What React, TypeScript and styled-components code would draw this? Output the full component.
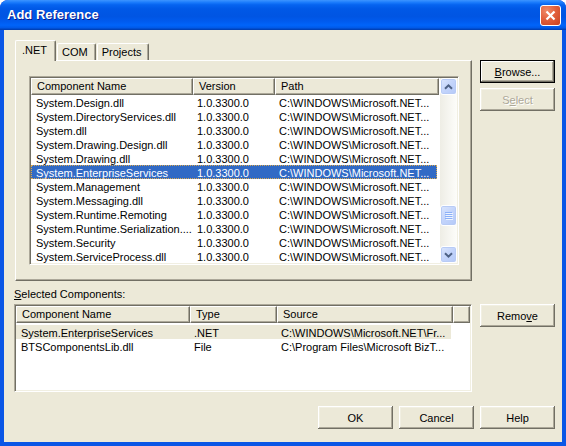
import React from 'react'
import styled, { createGlobalStyle, css } from 'styled-components'

const FONT = `'Liberation Sans', Tahoma, Arial, sans-serif`

const GlobalStyle = createGlobalStyle`
  html, body {
    margin: 0;
    padding: 0;
    background: #ffffff;
  }
  body {
    font-family: ${FONT};
    font-size: 11px;
    color: #000;
  }
`

interface Column {
  title: string
  width?: number
}

const refColumns: Column[] = [
  { title: 'Component Name', width: 162 },
  { title: 'Version', width: 82 },
  { title: 'Path', width: 164 }
]

const selColumns: Column[] = [
  { title: 'Component Name', width: 174 },
  { title: 'Type', width: 87 },
  { title: 'Source', width: 176 },
  { title: '' }
]

const NET_PATH = 'C:\\WINDOWS\\Microsoft.NET...'

const assemblies = [
  'System.Design.dll',
  'System.DirectoryServices.dll',
  'System.dll',
  'System.Drawing.Design.dll',
  'System.Drawing.dll',
  'System.EnterpriseServices',
  'System.Management',
  'System.Messaging.dll',
  'System.Runtime.Remoting',
  'System.Runtime.Serialization....',
  'System.Security',
  'System.ServiceProcess.dll'
].map(name => [name, '1.0.3300.0', NET_PATH])

const selected = [
  ['System.EnterpriseServices', '.NET', 'C:\\WINDOWS\\Microsoft.NET\\Fr...'],
  ['BTSComponentsLib.dll', 'File', 'C:\\Program Files\\Microsoft BizT...']
]

const Window = styled.div`
  width: 566px;
  height: 446px;
  display: flex;
  flex-direction: column;
  border-radius: 8px 8px 0 0;
  overflow: hidden;
  background: #0831d9;
`

const TitleBar = styled.div`
  height: 30px;
  flex: none;
  display: flex;
  align-items: center;
  justify-content: space-between;
  padding: 0 5px 0 7px;
  box-sizing: border-box;
  background: linear-gradient(
    180deg,
    #3d95ff 0%,
    #1b7cfc 8%,
    #0664f0 16%,
    #0058e6 30%,
    #0055e3 55%,
    #005bef 72%,
    #0064fa 84%,
    #005ae9 92%,
    #0047c4 97%,
    #003aa8 100%
  );
`

const Title = styled.span`
  font-family: ${FONT};
  font-weight: bold;
  font-size: 13px;
  color: #fff;
  text-shadow: 1px 1px #0a1a8a;
  padding-bottom: 1px;
`

const CloseButton = styled.div`
  width: 21px;
  height: 21px;
  box-sizing: border-box;
  border: 1px solid #fff;
  border-radius: 3px;
  background: radial-gradient(circle at 30% 25%, #f08a68 0%, #e2603c 45%, #c8401f 100%);
  display: flex;
  align-items: center;
  justify-content: center;
`

const Frame = styled.div`
  flex: 1;
  display: flex;
  border: 4px solid #0a56e6;
  border-top: 0;
  box-shadow: inset 1px 0 #0831d9, inset -1px 0 #0831d9, inset 0 -1px #0831d9;
`

const Body = styled.div`
  flex: 1;
  display: flex;
  flex-direction: column;
  background: #ece9d8;
  padding: 10px 7px 0 10px;
`

const TopRow = styled.div`
  display: flex;
  height: 234px;
  flex: none;
`

const TabControl = styled.div`
  width: 457px;
  margin-left: 1px;
  display: flex;
  flex-direction: column;
`

const TabStrip = styled.div`
  display: flex;
  align-items: flex-end;
  height: 20px;
  flex: none;
  position: relative;
  z-index: 1;
`

const Tab = styled.div<{ $active?: boolean }>`
  box-sizing: border-box;
  height: ${p => (p.$active ? 21 : 17)}px;
  padding: ${p => (p.$active ? '3px 8px 0 6px' : '2px 7px 0 4px')};
  margin-bottom: ${p => (p.$active ? -1 : 0)}px;
  background: #ece9d8;
  border-top: 1px solid #fff;
  border-left: 1px solid #fff;
  border-right: 1px solid #716f64;
  border-radius: 2px 2px 0 0;
  box-shadow: inset -1px 0 #aca899;
  line-height: 13px;
  white-space: nowrap;
  ${p =>
    !p.$active &&
    css`
      margin-left: 1px;
    `}
`

const TabPanel = styled.div`
  flex: 1;
  display: flex;
  box-sizing: border-box;
  background: #ece9d8;
  border-top: 1px solid #fff;
  border-left: 1px solid #fff;
  border-right: 1px solid #716f64;
  border-bottom: 1px solid #716f64;
  box-shadow: inset -1px -1px #aca899;
  padding: 15px 12px 15px 13px;
`

const ButtonColumn = styled.div<{ $top: number }>`
  display: flex;
  flex-direction: column;
  gap: 5px;
  margin-left: 8px;
  padding-top: ${p => p.$top}px;
`

const Button = styled.button<{ $isDefault?: boolean }>`
  width: 75px;
  height: 23px;
  padding: 0;
  font-family: ${FONT};
  font-size: 11px;
  color: #000;
  background: #ece9d8;
  border: none;
  box-shadow: inset -1px -1px #716f64, inset 1px 1px #fff, inset -2px -2px #aca899, inset 2px 2px #f1efe2;
  ${p =>
    p.$isDefault &&
    css`
      box-shadow: inset 0 0 0 1px #000, inset -2px -2px #716f64, inset 2px 2px #fff, inset -3px -3px #aca899;
    `}
  &:disabled {
    color: #aca899;
    text-shadow: 1px 1px #fff;
  }
`

const U = styled.span`
  text-decoration: underline;
`

const Label = styled.div`
  margin-top: 13px;
  height: 14px;
  line-height: 14px;
  flex: none;
`

const MidRow = styled.div`
  display: flex;
  margin-top: 3px;
  height: 88px;
  flex: none;
`

const ListBox = styled.div<{ $width?: number }>`
  display: flex;
  box-sizing: border-box;
  ${p => (p.$width ? `width: ${p.$width}px;` : 'flex: 1;')}
  background: #fff;
  border: 1px solid;
  border-color: #aca899 #fff #fff #aca899;
  box-shadow: inset 1px 1px #716f64, inset -1px -1px #f1efe2;
  padding: 1px;
`

const ListMain = styled.div`
  flex: 1;
  display: flex;
  flex-direction: column;
  overflow: hidden;
`

const HeaderRow = styled.div`
  display: flex;
  height: 17px;
  flex: none;
`

const HeaderCell = styled.div<{ $w?: number }>`
  ${p => (p.$w ? `width: ${p.$w}px; flex: none;` : 'flex: 1;')}
  box-sizing: border-box;
  padding-left: 5px;
  background: #ece9d8;
  border-top: 1px solid #fff;
  border-left: 1px solid #fff;
  border-right: 1px solid #716f64;
  border-bottom: 1px solid #716f64;
  box-shadow: inset -1px -1px #aca899;
  line-height: 14px;
  white-space: nowrap;
  overflow: hidden;
`

const Rows = styled.div<{ $pad: number }>`
  padding-top: ${p => p.$pad}px;
`

const Row = styled.div<{ $state?: 'focus' | 'inactive' }>`
  display: flex;
  height: 14px;
  width: fit-content;
  ${p =>
    p.$state === 'focus' &&
    css`
      background: #316ac5;
      color: #fff;
      outline: 1px dotted #d9a84f;
      outline-offset: -1px;
    `}
  ${p =>
    p.$state === 'inactive' &&
    css`
      background: #ece9d8;
    `}
`

const Cell = styled.div<{ $w: number }>`
  width: ${p => p.$w}px;
  flex: none;
  box-sizing: border-box;
  padding: 1px 0 0 5px;
  line-height: 14px;
  white-space: nowrap;
`

const ScrollBar = styled.div`
  width: 17px;
  flex: none;
  display: flex;
  flex-direction: column;
  background: linear-gradient(to right, #eeede5, #fdfdfa);
`

const ScrollButton = styled.div`
  height: 17px;
  flex: none;
  box-sizing: border-box;
  border: 1px solid #fff;
  border-radius: 3px;
  background: linear-gradient(135deg, #dbe6fd 0%, #c3d4fb 50%, #b4c9f8 100%);
  box-shadow: inset 0 0 0 1px #b8cbf5;
  display: flex;
  align-items: center;
  justify-content: center;
`

const Track = styled.div<{ $offset: number }>`
  flex: 1;
  padding-top: ${p => p.$offset}px;
`

const Thumb = styled(ScrollButton)`
  height: 21px;
  flex-direction: column;
  gap: 1px;
`

const Grip = styled.div`
  width: 7px;
  height: 1px;
  background: #8cb0f8;
  box-shadow: 1px 1px #eef4fe;
`

const BottomRow = styled.div`
  display: flex;
  justify-content: flex-end;
  gap: 6px;
  margin-top: 14px;
`

const Chevron = ({ down }: { down?: boolean }) => (
  <svg width="9" height="6" viewBox="0 0 9 6">
    <path
      d={down ? 'M1 1.2 L4.5 4.6 L8 1.2' : 'M1 4.8 L4.5 1.4 L8 4.8'}
      fill="none"
      stroke="#4d6185"
      strokeWidth="2"
    />
  </svg>
)

const ListView = ({
  columns,
  rows,
  width,
  rowPad,
  selectedIndex,
  selState,
  scroll
}: {
  columns: Column[]
  rows: string[][]
  width?: number
  rowPad: number
  selectedIndex: number
  selState: 'focus' | 'inactive'
  scroll?: number
}) => (
  <ListBox $width={width}>
    <ListMain>
      <HeaderRow>
        {columns.map((c, i) => (
          <HeaderCell key={i} $w={c.width}>
            {c.title}
          </HeaderCell>
        ))}
      </HeaderRow>
      <Rows $pad={rowPad}>
        {rows.map((r, i) => (
          <Row key={i} $state={i === selectedIndex ? selState : undefined}>
            {r.map((text, j) => (
              <Cell key={j} $w={(columns[j].width ?? 0) - (j === 0 ? 1 : 0) - (j === r.length - 1 ? 1 : 0)}>
                {text}
              </Cell>
            ))}
          </Row>
        ))}
      </Rows>
    </ListMain>
    {scroll !== undefined && (
      <ScrollBar>
        <ScrollButton>
          <Chevron />
        </ScrollButton>
        <Track $offset={scroll}>
          <Thumb>
            <Grip />
            <Grip />
            <Grip />
            <Grip />
          </Thumb>
        </Track>
        <ScrollButton>
          <Chevron down />
        </ScrollButton>
      </ScrollBar>
    )}
  </ListBox>
)

export default function App() {
  return (
    <>
      <GlobalStyle />
      <Window>
        <TitleBar>
          <Title>Add Reference</Title>
          <CloseButton>
            <svg width="11" height="11" viewBox="0 0 11 11">
              <path d="M1.5 1.5 L9.5 9.5 M9.5 1.5 L1.5 9.5" stroke="#fff" strokeWidth="2.2" />
            </svg>
          </CloseButton>
        </TitleBar>
        <Frame>
          <Body>
            <TopRow>
              <TabControl>
                <TabStrip>
                  <Tab $active>.NET</Tab>
                  <Tab>COM</Tab>
                  <Tab>Projects</Tab>
                </TabStrip>
                <TabPanel>
                  <ListView
                    columns={refColumns}
                    rows={assemblies}
                    rowPad={0}
                    selectedIndex={5}
                    selState="focus"
                    scroll={110}
                  />
                </TabPanel>
              </TabControl>
              <ButtonColumn $top={20}>
                <Button $isDefault>
                  <U>B</U>rowse...
                </Button>
                <Button disabled>
                  S<U>e</U>lect
                </Button>
              </ButtonColumn>
            </TopRow>
            <Label>
              <U>S</U>elected Components:
            </Label>
            <MidRow>
              <ListView
                columns={selColumns}
                rows={selected}
                width={458}
                rowPad={2}
                selectedIndex={0}
                selState="inactive"
              />
              <ButtonColumn $top={0}>
                <Button>
                  Remo<U>v</U>e
                </Button>
              </ButtonColumn>
            </MidRow>
            <BottomRow>
              <Button>OK</Button>
              <Button>Cancel</Button>
              <Button>Help</Button>
            </BottomRow>
          </Body>
        </Frame>
      </Window>
    </>
  )
}
